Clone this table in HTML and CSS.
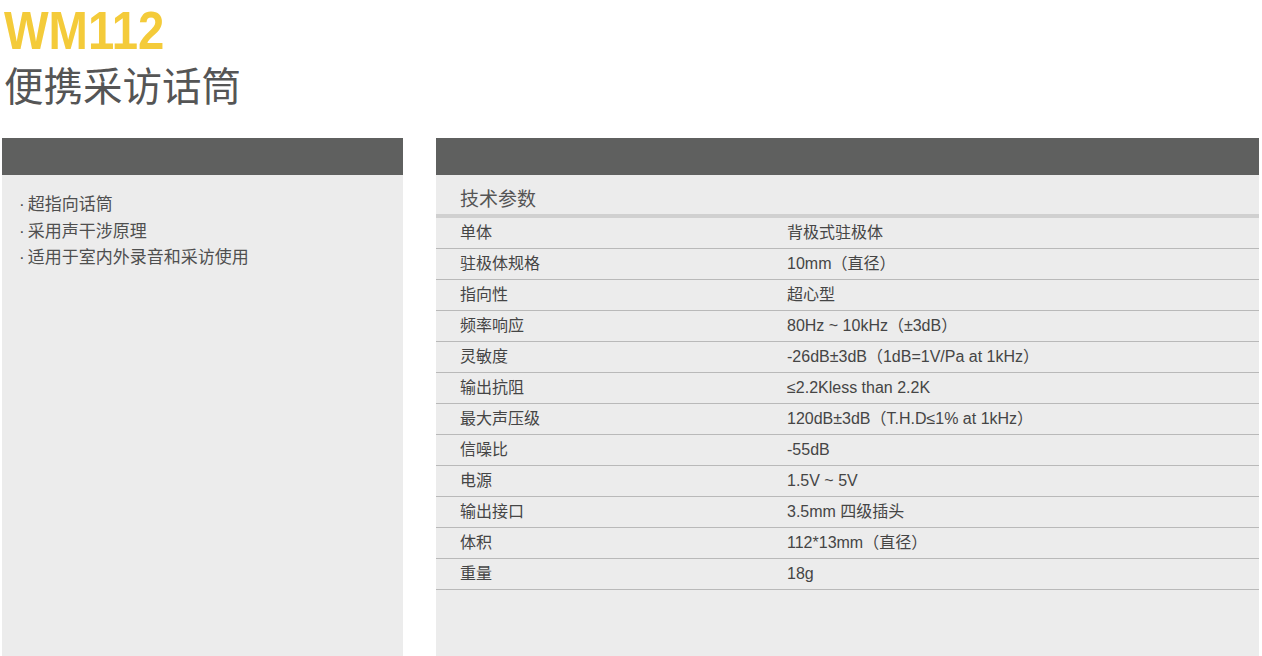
FILE: index.html
```html
<!DOCTYPE html>
<html lang="zh-CN">
<head>
<meta charset="utf-8">
<title>WM112 便携采访话筒</title>
<link rel="stylesheet" href="styles.css">
</head>
<body>
<header class="title-block">
  <h1 class="model">WM112</h1>
  <h2 class="subtitle">便携采访话筒</h2>
</header>
<main class="panels">
  <section class="panel panel-left">
    <div class="panel-head"></div>
    <ul class="features">
      <li><span class="dot">·</span>超指向话筒</li>
      <li><span class="dot">·</span>采用声干涉原理</li>
      <li><span class="dot">·</span>适用于室内外录音和采访使用</li>
    </ul>
  </section>
  <section class="panel panel-right">
    <div class="panel-head"></div>
    <div class="spec-title">技术参数</div>
    <div class="specs">
      <div class="row"><span class="k">单体</span><span class="v">背极式驻极体</span></div>
      <div class="row"><span class="k">驻极体规格</span><span class="v">10mm（直径）</span></div>
      <div class="row"><span class="k">指向性</span><span class="v">超心型</span></div>
      <div class="row"><span class="k">频率响应</span><span class="v">80Hz ~ 10kHz（±3dB）</span></div>
      <div class="row"><span class="k">灵敏度</span><span class="v">-26dB±3dB（1dB=1V/Pa at 1kHz）</span></div>
      <div class="row"><span class="k">输出抗阻</span><span class="v">≤2.2Kless than 2.2K</span></div>
      <div class="row"><span class="k">最大声压级</span><span class="v">120dB±3dB（T.H.D≤1% at 1kHz）</span></div>
      <div class="row"><span class="k">信噪比</span><span class="v">-55dB</span></div>
      <div class="row"><span class="k">电源</span><span class="v">1.5V ~ 5V</span></div>
      <div class="row"><span class="k">输出接口</span><span class="v">3.5mm 四级插头</span></div>
      <div class="row"><span class="k">体积</span><span class="v">112*13mm（直径）</span></div>
      <div class="row"><span class="k">重量</span><span class="v">18g</span></div>
    </div>
  </section>
</main>
</body>
</html>
```
FILE: styles.css
```css
html, body {
  margin: 0;
  padding: 0;
  background: #ffffff;
  overflow: hidden;
}
body {
  width: 1262px;
  height: 656px;
  font-family: "Liberation Sans", "Noto Sans CJK SC", sans-serif;
  color: #4a4a4a;
}
.title-block {
  padding-left: 4px;
}
.model {
  margin: 0;
  padding-top: 3px;
  font-family: "Liberation Sans", sans-serif;
  font-weight: bold;
  font-size: 54px;
  line-height: 55px;
  color: #f4cb3a;
  letter-spacing: 0;
  transform: scaleX(0.875);
  transform-origin: left center;
}
.subtitle {
  margin: 0;
  padding-top: 3px;
  font-family: "Noto Sans CJK SC", sans-serif;
  font-weight: normal;
  font-size: 39.5px;
  line-height: 46px;
  color: #555555;
}
.panels {
  display: flex;
  gap: 33px;
  padding-left: 2px;
  margin-top: 31px;
}
.panel {
  background: #ececec;
  height: 540px;
}
.panel-left {
  width: 401px;
}
.panel-right {
  width: 823px;
}
.panel-head {
  height: 37px;
  background: #5f605f;
}
.features {
  list-style: none;
  margin: 0;
  padding: 17px 0 0 17px;
  font-family: "Liberation Sans", "Noto Sans CJK SC", sans-serif;
  font-size: 17px;
  line-height: 26.5px;
  color: #4f4f4f;
}
.features li {
  height: 26.5px;
}
.dot {
  margin-right: 3px;
}
.spec-title {
  font-family: "Noto Sans CJK SC", sans-serif;
  font-size: 19px;
  line-height: 33px;
  height: 33px;
  padding-top: 6px;
  padding-left: 24px;
  color: #555555;
}
.specs {
  border-top: 4px solid #d0d0d0;
}
.row {
  display: flex;
  height: 30px;
  line-height: 30px;
  border-bottom: 1px solid #b9b9b9;
  font-size: 16px;
  color: #454545;
  font-family: "Liberation Sans", "Noto Sans CJK SC", sans-serif;
}
.k {
  width: 327px;
  padding-left: 24px;
}
```
